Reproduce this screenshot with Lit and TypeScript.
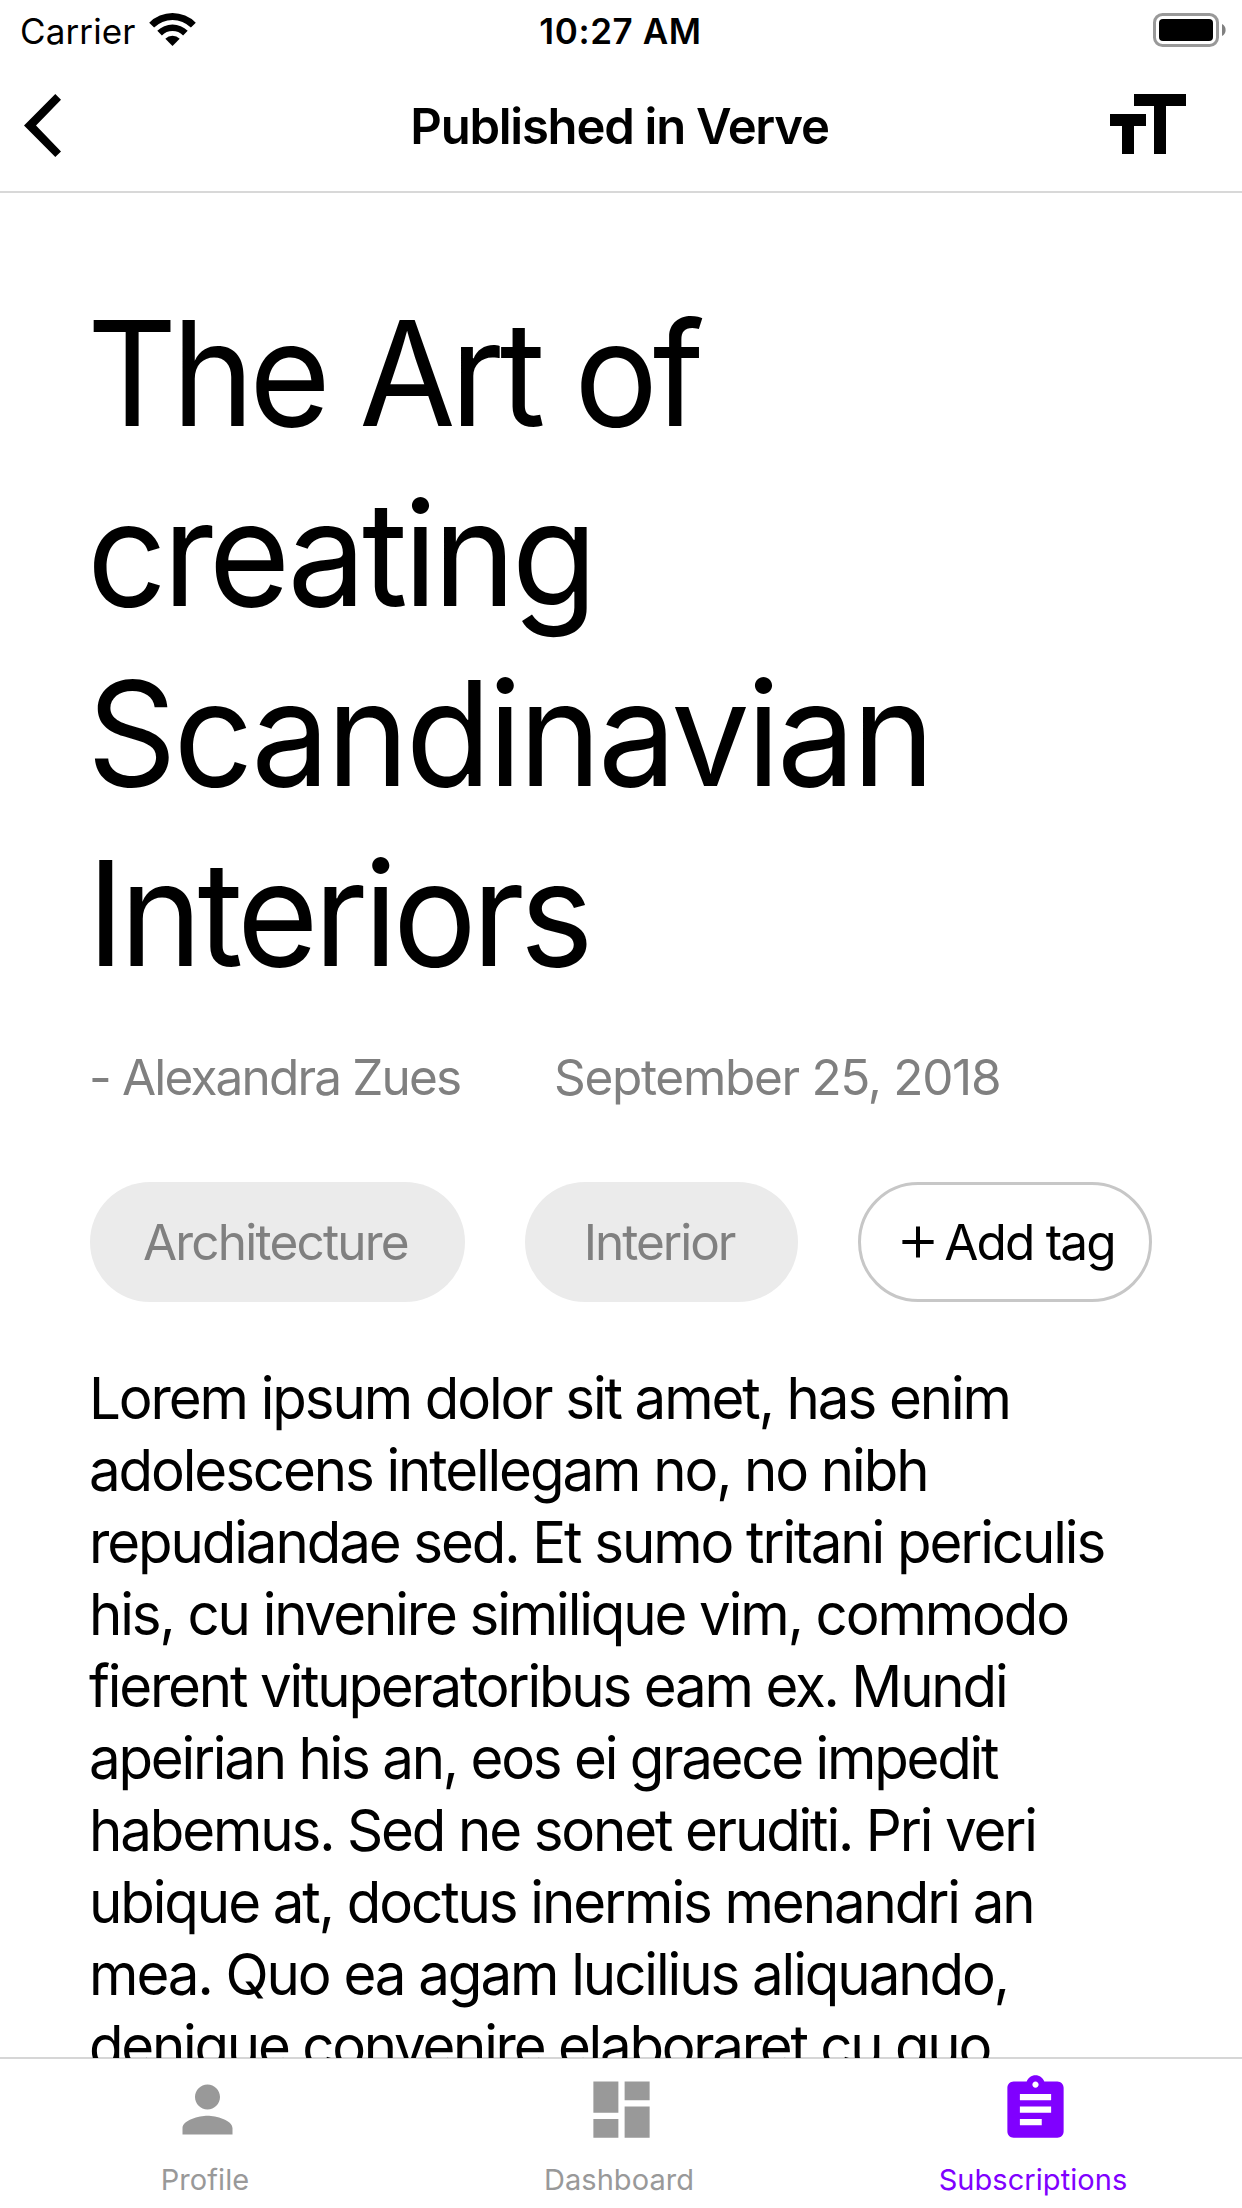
import { LitElement, html, svg, css } from "lit";
import { customElement, property } from "lit/decorators.js";
import { classMap } from "lit/directives/class-map.js";
import { styleMap } from "lit/directives/style-map.js";

interface Line {
  text: string;
  tracking: number;
}

const TITLE: Line[] = [
  { text: "The Art of", tracking: -5.52 },
  { text: "creating", tracking: -4.27 },
  { text: "Scandinavian", tracking: -3.36 },
  { text: "Interiors", tracking: -4.95 },
];

const BODY: Line[] = [
  { text: "Lorem ipsum dolor sit amet, has enim", tracking: -2.168 },
  { text: "adolescens intellegam no, no nibh", tracking: -2.164 },
  { text: "repudiandae sed. Et sumo tritani periculis", tracking: -2.159 },
  { text: "his, cu invenire similique vim, commodo", tracking: -2.169 },
  { text: "fierent vituperatoribus eam ex. Mundi", tracking: -2.25 },
  { text: "apeirian his an, eos ei graece impedit", tracking: -2.3 },
  { text: "habemus. Sed ne sonet eruditi. Pri veri", tracking: -2.208 },
  { text: "ubique at, doctus inermis menandri an", tracking: -2.145 },
  { text: "mea. Quo ea agam lucilius aliquando,", tracking: -2.128 },
  { text: "denique convenire elaboraret cu quo", tracking: -2.321 },
];

const renderLines = (lines: Line[]) =>
  lines.map(
    (l) =>
      html`<span class="line" style=${styleMap({ letterSpacing: `${l.tracking}px` })}>${l.text}</span>`
  );

@customElement("status-bar")
export class StatusBar extends LitElement {
  static styles = css`
    :host {
      display: grid;
      grid-template-columns: 1fr auto 1fr;
      align-items: center;
      height: 60px;
      padding: 0 16px 0 15px;
      box-sizing: border-box;
      font-size: 35px;
      line-height: 56px;
    }
    .left {
      display: flex;
      align-items: center;
      gap: 13px;
      padding-left: 5px;
      letter-spacing: 0.12px;
    }
    .text {
      padding-top: 1px;
    }
    .time {
      font-weight: 600;
      letter-spacing: 0.6px;
    }
    .battery {
      justify-self: end;
    }
    svg {
      display: block;
    }
  `;
  render() {
    return html`
      <div class="left">
        <span class="text">Carrier</span>
        <svg width="47" height="34" viewBox="0 0 47 34">
          <path d="M0.2 9.7A33 33 0 0 1 46.8 9.7L41.9 14.6A26 26 0 0 0 5.1 14.6Z" />
          <path d="M8.3 17.8A21.5 21.5 0 0 1 38.7 17.8L34.1 22.4A15 15 0 0 0 12.9 22.4Z" />
          <path d="M16.3 25.8A10.3 10.3 0 0 1 30.7 25.8L23.5 33Z" />
        </svg>
      </div>
      <div class="text time">10:27 AM</div>
      <svg class="battery" width="73" height="34" viewBox="0 0 73 34">
        <rect x="1.5" y="1.5" width="63" height="31" rx="8" fill="none" stroke="#999" stroke-width="3" />
        <rect x="6" y="6" width="54" height="22" rx="4" />
        <path d="M69 11A6.8 6.8 0 0 1 69 23Z" fill="#808080" />
      </svg>
    `;
  }
}

@customElement("nav-header")
export class NavHeader extends LitElement {
  static styles = css`
    :host {
      display: grid;
      grid-template-columns: 1fr auto 1fr;
      align-items: center;
      height: 133px;
      box-sizing: border-box;
      padding: 0 56px 0 53px;
      border-bottom: 2px solid #d8d8d8;
    }
    .back {
      margin-left: -29px;
    }
    .title {
      padding-top: 3px;
      font-size: 49px;
      line-height: 60px;
      font-weight: 600;
      letter-spacing: -1.233px;
    }
    .size {
      justify-self: end;
    }
    svg {
      display: block;
    }
  `;
  render() {
    return html`
      <svg class="back" width="37" height="63" viewBox="0 0 37 63">
        <path d="M31.3 0L37 5.7L12 31.4L37 57.4L31.3 63L0 31.4Z" />
      </svg>
      <div class="title">Published in Verve</div>
      <svg class="size" width="76" height="63" viewBox="0 0 76 63">
        <path d="M24 0H76V12H56V60H44V12H24ZM0 20H36V32H24V60H12V32H0Z" />
      </svg>
    `;
  }
}

@customElement("article-view")
export class ArticleView extends LitElement {
  static styles = css`
    :host {
      display: block;
      padding: 90px 60px 0 89px;
      white-space: nowrap;
      overflow: hidden;
    }
    .line {
      display: block;
      transform-origin: left;
    }
    .title {
      margin: 0 0 44px -2px;
      font-size: 145.5px;
      font-weight: 400;
      line-height: 180px;
    }
    .title .line {
      transform: scaleX(0.96);
    }
    .meta {
      display: flex;
      gap: 93.7px;
      margin-bottom: 75px;
      font-size: 49.5px;
      line-height: 60px;
      color: #808080;
      letter-spacing: -1.837px;
    }
    .date {
      letter-spacing: -1.316px;
    }
    .tags {
      display: flex;
      gap: 60px;
      margin: 0 0 60px 1px;
      font-size: 49.5px;
      line-height: 60px;
      letter-spacing: -1.8px;
    }
    .tag {
      display: flex;
      align-items: center;
      box-sizing: border-box;
      height: 120px;
      width: 375px;
      padding-left: 53px;
      border-radius: 60px;
      background: #ebebeb;
      color: #808080;
    }
    .tag.short {
      width: 273px;
      padding-left: 58.7px;
      letter-spacing: -2px;
    }
    .tag.add {
      width: 294px;
      padding-left: 41.4px;
      gap: 9.8px;
      border: 3px solid #c7c7c7;
      background: #fff;
      color: #000;
    }
    .body {
      margin: 0;
      font-size: 58.2px;
      line-height: 72px;
    }
    .body .line {
      transform: scaleX(0.97);
    }
  `;
  render() {
    return html`
      <h1 class="title">${renderLines(TITLE)}</h1>
      <div class="meta">
        <span>- Alexandra Zues</span>
        <span class="date">September 25, 2018</span>
      </div>
      <div class="tags">
        <div class="tag">Architecture</div>
        <div class="tag short">Interior</div>
        <div class="tag add">
          <svg width="32" height="32" viewBox="0 0 32 32">
            <path d="M16 0.5V31.5M0.4 16H31.6" stroke="#000" stroke-width="4" />
          </svg>
          <span>Add tag</span>
        </div>
      </div>
      <p class="body">${renderLines(BODY)}</p>
    `;
  }
}

const ICONS = {
  profile: svg`<path d="M12 12c2.21 0 4-1.79 4-4s-1.79-4-4-4-4 1.79-4 4 1.79 4 4 4zm0 2c-2.67 0-8 1.34-8 4v2h16v-2c0-2.66-5.33-4-8-4z" />`,
  dashboard: svg`<path d="M3 13h8V3H3v10zm0 8h8v-6H3v6zm10 0h8V11h-8v10zm0-18v6h8V3h-8z" />`,
  subscriptions: svg`<path d="M19 3h-4.18C14.4 1.84 13.3 1 12 1c-1.3 0-2.4.84-2.82 2H5c-1.1 0-2 .9-2 2v14c0 1.1.9 2 2 2h14c1.1 0 2-.9 2-2V5c0-1.1-.9-2-2-2zm-7 0c.55 0 1 .45 1 1s-.45 1-1 1-1-.45-1-1 .45-1 1-1zm2 14H7v-2h7v2zm3-4H7v-2h10v2zm0-4H7V7h10v2z" />`,
};

@customElement("tab-bar")
export class TabBar extends LitElement {
  @property() active = "subscriptions";

  static styles = css`
    :host {
      display: grid;
      grid-template-columns: repeat(3, 1fr);
      height: 151px;
      box-sizing: border-box;
      border-top: 2px solid rgba(0, 0, 0, 0.16);
      background: #fff;
      background-clip: padding-box;
      position: relative;
      flex: none;
    }
    .tab {
      display: flex;
      flex-direction: column;
      align-items: center;
      gap: 15px;
      padding-top: 12.5px;
      color: #999;
      fill: #999;
    }
    .tab.active {
      color: #8000ff;
      fill: #8000ff;
    }
    .label {
      padding-right: 4px;
      font-size: 29px;
      line-height: 36px;
      letter-spacing: 0.06px;
    }
    svg {
      display: block;
    }
  `;
  render() {
    const tabs: [keyof typeof ICONS, string][] = [
      ["profile", "Profile"],
      ["dashboard", "Dashboard"],
      ["subscriptions", "Subscriptions"],
    ];
    return tabs.map(
      ([id, label]) => html`
        <div class=${classMap({ tab: true, active: id === this.active })}>
          <svg width="75" height="75" viewBox="0 0 24 24">${ICONS[id]}</svg>
          <span class="label">${label}</span>
        </div>
      `
    );
  }
}

@customElement("app-root")
export class AppRoot extends LitElement {
  static styles = css`
    :host {
      display: flex;
      flex-direction: column;
      width: 1242px;
      height: 2208px;
      overflow: hidden;
      background: #fff;
      color: #000;
      font-family: Inter, "Liberation Sans", sans-serif;
    }
    .article {
      flex: 1;
      min-height: 0;
      margin-bottom: -1px;
    }
  `;
  render() {
    return html`
      <status-bar></status-bar>
      <nav-header></nav-header>
      <article-view class="article"></article-view>
      <tab-bar></tab-bar>
    `;
  }
}
